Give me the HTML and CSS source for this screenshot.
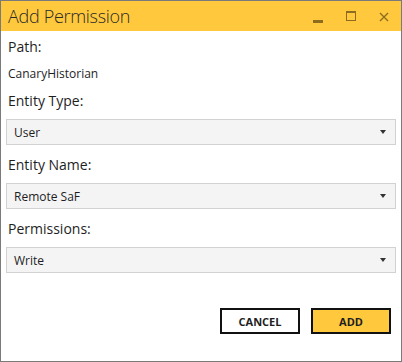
FILE: index.html
```html
<!DOCTYPE html>
<html lang="en">
<head>
    <meta charset="UTF-8">
    <meta name="viewport" content="width=device-width, initial-scale=1.0">
    <title>Add Permission</title>
    <link rel="stylesheet" href="styles.css">
</head>
<body>
    <div class="window">
        <div class="title-bar">
            <div class="title">Add Permission</div>
            <div class="window-controls">
                <span class="ctrl ctrl-min">
                    <svg width="10" height="10" viewBox="0 0 10 10"><rect x="0" y="6" width="10" height="3" fill="currentColor"/></svg>
                </span>
                <span class="ctrl ctrl-max">
                    <svg width="10" height="10" viewBox="0 0 10 10"><rect x="0.5" y="0.5" width="9" height="9" fill="none" stroke="currentColor"/><rect x="0" y="0" width="10" height="2" fill="currentColor"/></svg>
                </span>
                <span class="ctrl ctrl-close">
                    <svg width="10" height="10" viewBox="0 0 10 10"><path d="M1 1 L9 9 M9 1 L1 9" stroke="currentColor" stroke-width="1.4" fill="none"/></svg>
                </span>
            </div>
        </div>
        <div class="content">
            <div class="label">Path:</div>
            <div class="path-value">CanaryHistorian</div>

            <div class="label">Entity Type:</div>
            <div class="combo">
                <span>User</span>
                <span class="arrow"></span>
            </div>

            <div class="label">Entity Name:</div>
            <div class="combo">
                <span>Remote SaF</span>
                <span class="arrow"></span>
            </div>

            <div class="label">Permissions:</div>
            <div class="combo">
                <span>Write</span>
                <span class="arrow"></span>
            </div>

            <div class="actions">
                <button class="btn btn-cancel">CANCEL</button>
                <button class="btn btn-add">ADD</button>
            </div>
        </div>
    </div>
</body>
</html>
```

FILE: styles.css
```css
body {
    margin: 0;
    font-family: "Open Sans", "Noto Sans", sans-serif;
    color: #1e1e1e;
    background: #fff;
}
.window {
    width: 400px;
    height: 360px;
    border: 1px solid #7a7a7a;
    background: #fff;
    display: flex;
    flex-direction: column;
}
.title-bar {
    height: 30px;
    background: #ffc83d;
    display: flex;
    align-items: center;
    justify-content: space-between;
}
.title {
    font-size: 18px;
    font-weight: 300;
    color: #2b2b2b;
    padding-left: 7px;
    letter-spacing: -0.3px;
}
.window-controls {
    display: flex;
    align-items: center;
    padding-right: 12px;
    gap: 23px;
    color: #8c6d1f;
}
.ctrl {
    display: flex;
    width: 10px;
    height: 10px;
}
.ctrl-min {
    position: relative;
    top: 3px;
}
.ctrl-close {
    position: relative;
    top: 1px;
}

/* form */
.content {
    padding: 6px 5px 0 5px;
    display: flex;
    flex-direction: column;
}
.label {
    font-size: 14px;
    line-height: 20px;
    padding-left: 2px;
    margin-bottom: 8px;
}
.path-value {
    font-size: 12px;
    line-height: 16px;
    padding-left: 2px;
    margin-top: 1px;
    margin-bottom: 9px;
}
.combo {
    height: 24px;
    border: 1px solid #d2d2d2;
    background: #f4f4f4;
    display: flex;
    align-items: center;
    justify-content: space-between;
    padding: 0 9px 0 7px;
    font-size: 12px;
    margin-bottom: 10px;
}
.arrow {
    width: 0;
    height: 0;
    border-left: 3px solid transparent;
    border-right: 3px solid transparent;
    border-top: 4px solid #333;
}

.actions {
    display: flex;
    justify-content: flex-end;
    gap: 11px;
    margin-top: 25px;
    padding-right: 5px;
}
.btn {
    width: 80px;
    height: 26px;
    border: 2px solid #111;
    font-family: "Open Sans", "Noto Sans", sans-serif;
    font-size: 11px;
    font-weight: 700;
    color: #1e1e1e;
    padding: 0;
    cursor: pointer;
}
.btn-cancel {
    background: #fff;
}
.btn-add {
    background: #ffc83d;
}
```
